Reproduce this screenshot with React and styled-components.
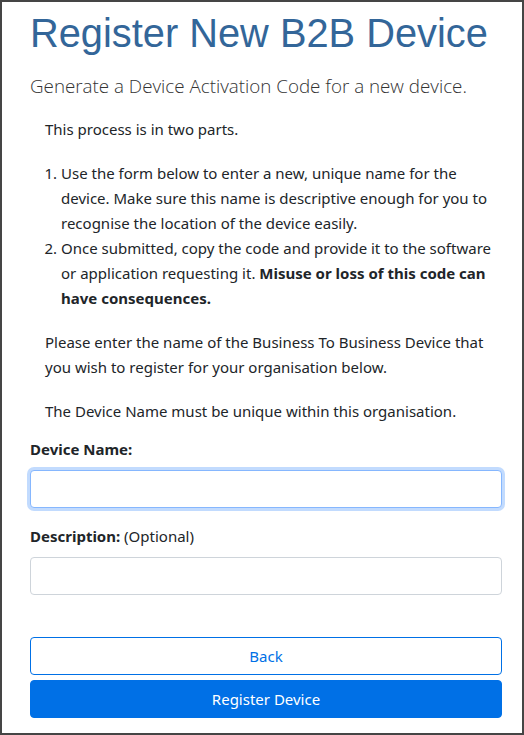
import React from "react";
import styled, { createGlobalStyle } from "styled-components";

const GlobalStyle = createGlobalStyle`
  html, body {
    margin: 0;
    padding: 0;
    background: #fff;
  }
  body {
    font-family: "Noto Sans", "Open Sans", sans-serif;
    color: #212529;
  }
  * {
    box-sizing: border-box;
  }
`;

export default function App() {
  return (
    <>
      <GlobalStyle />
      <Frame>
        <Title>Register New B2B Device</Title>
        <Lead>Generate a Device Activation Code for a new device.</Lead>
        <Intro>
          <Para>This process is in two parts.</Para>
          <Steps>
            <li>
              Use the form below to enter a new, unique name for the device.
              Make sure this name is descriptive enough for you to recognise
              the location of the device easily.
            </li>
            <li>
              Once submitted, copy the code and provide it to the software or
              application requesting it.{" "}
              <strong>Misuse or loss of this code can have consequences.</strong>
            </li>
          </Steps>
          <Para>
            Please enter the name of the Business To Business Device that you
            wish to register for your organisation below.
          </Para>
          <Para $last>The Device Name must be unique within this organisation.</Para>
        </Intro>
        <Field>
          <Label htmlFor="deviceName">
            <strong>Device Name:</strong>
          </Label>
          <Input id="deviceName" type="text" $focused />
        </Field>
        <Field>
          <Label htmlFor="description">
            <strong>Description:</strong> (Optional)
          </Label>
          <Input id="description" type="text" />
        </Field>
        <Actions>
          <Button $variant="outline">Back</Button>
          <Button $variant="primary">Register Device</Button>
        </Actions>
      </Frame>
    </>
  );
}

const Frame = styled.div`
  height: 735px;
  border: 2px solid #454545;
  padding: 5px 20px 0 28px;
  overflow: hidden;
`;

const Title = styled.h1`
  margin: 0;
  font-family: "Liberation Sans", Arial, sans-serif;
  font-weight: 400;
  font-size: 39.8px;
  line-height: 52px;
  color: #336699;
`;

const Lead = styled.p`
  margin: 13px 0 0;
  font-family: "Open Sans", sans-serif;
  font-weight: 300;
  font-size: 18.8px;
  line-height: 28px;
  color: #333;
`;

const Intro = styled.div`
  padding: 17px 0 0 15px;
  font-size: 15px;
  line-height: 25px;
`;

const Para = styled.p`
  margin: 0 0 ${(p) => (p.$last ? "13px" : "19px")};
`;

const Steps = styled.ol`
  margin: 0 0 19px;
  padding-left: 16px;

  strong {
    font-weight: 700;
  }
`;

const Field = styled.div`
  margin-bottom: 16px;
`;

const Label = styled.label`
  display: block;
  font-size: 15px;
  line-height: 25px;
  margin-bottom: 8px;

  strong {
    font-weight: 700;
  }
`;

const Input = styled.input`
  display: block;
  width: 100%;
  height: 38px;
  padding: 6px 12px;
  font: inherit;
  border: 1px solid ${(p) => (p.$focused ? "#86b7fe" : "#ced4da")};
  border-radius: 4px;
  background: #fff;
  box-shadow: ${(p) => (p.$focused ? "0 0 0 3px rgba(13,110,253,0.25)" : "none")};
  outline: none;
`;

const Actions = styled.div`
  display: flex;
  flex-direction: column;
  gap: 5px;
  margin-top: 42px;
`;

const Button = styled.button`
  display: block;
  width: 100%;
  height: 38px;
  border-radius: 4px;
  font-family: "Noto Sans", sans-serif;
  font-size: 15px;
  border: 1px solid #0070e6;
  color: ${(p) => (p.$variant === "primary" ? "#fff" : "#0070e6")};
  background: ${(p) => (p.$variant === "primary" ? "#0070e6" : "#fff")};
  cursor: pointer;
`;
